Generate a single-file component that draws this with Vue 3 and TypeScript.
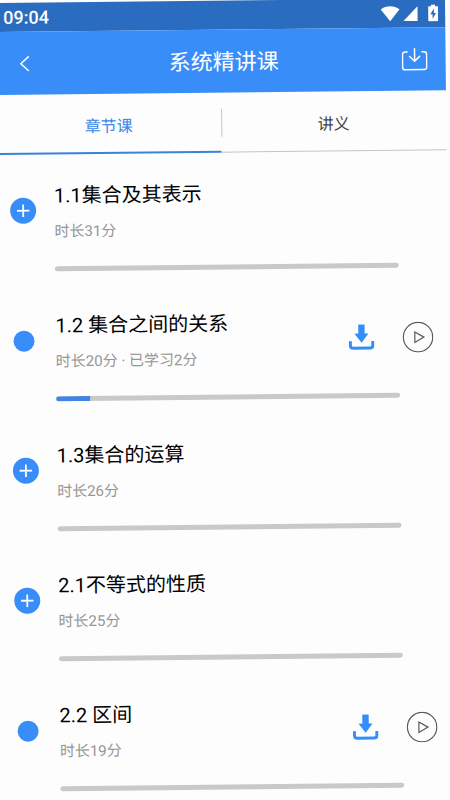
<script setup lang="ts">
import { ref } from 'vue'

interface Lesson {
  title: string
  meta: string
  progress: number
  expandable: boolean
}

const tabs: string[] = ['章节课', '讲义']
const activeTab = ref(0)

const lessons: Lesson[] = [
  { title: '1.1集合及其表示', meta: '时长31分', progress: 0, expandable: true },
  { title: '1.2 集合之间的关系', meta: '时长20分 · 已学习2分', progress: 10, expandable: false },
  { title: '1.3集合的运算', meta: '时长26分', progress: 0, expandable: true },
  { title: '2.1不等式的性质', meta: '时长25分', progress: 0, expandable: true },
  { title: '2.2 区间', meta: '时长19分', progress: 0, expandable: false },
]
</script>

<template>
  <div class="stage">
    <div class="screen">
      <div class="status">
        <span class="time">09:04</span>
        <div class="status-icons">
          <svg class="wifi" width="20" height="16" viewBox="0 0 20 16">
            <path d="M.6 3.6C6-.7 14-.7 19.4 3.6L10 15.4Z" fill="#fff" />
          </svg>
          <svg class="signal" width="15" height="16" viewBox="0 0 15 16">
            <path d="M14.4.6V15.4H.3Z" fill="#fff" />
          </svg>
          <svg class="battery" width="10" height="17" viewBox="0 0 10 17">
            <path d="M3 0H7V1.8H9Q10 1.8 10 2.8V16Q10 17 9 17H1Q0 17 0 16V2.8Q0 1.8 1 1.8H3Z" fill="#fff" />
            <path d="M5.8 4.2 2.2 9.8H4.4V14.4L7.9 8.5H5.8Z" fill="#2a6dc0" />
          </svg>
        </div>
      </div>

      <header class="header">
        <button class="icon-button" type="button">
          <svg width="10" height="16" viewBox="0 0 10 16" fill="none" stroke="#fff" stroke-width="1.5">
            <path d="M9.2.7 1.2 8 9.2 15.3" />
          </svg>
        </button>
        <h1>系统精讲课</h1>
        <button class="icon-button" type="button">
          <svg width="26" height="24" viewBox="0 0 26 24" fill="none" stroke="#fff" stroke-width="1.5" stroke-linecap="round" stroke-linejoin="round">
            <path d="M5.6 4.3H3.6Q.9 4.3.9 7V19.4Q.9 22.1 3.6 22.1H22.4Q25.1 22.1 25.1 19.4V7Q25.1 4.3 22.4 4.3H20.4" />
            <path d="M13 1.2V13.6M8 8.8 13 13.7 18 8.8" />
          </svg>
        </button>
      </header>

      <nav class="tabs">
        <button
          v-for="(tab, i) in tabs"
          :key="tab"
          type="button"
          class="tab"
          :class="{ active: activeTab === i }"
          @click="activeTab = i"
        >
          {{ tab }}
        </button>
      </nav>

      <main>
        <article v-for="lesson in lessons" :key="lesson.title" class="lesson">
          <div class="lesson-head">
            <div class="marker">
              <button v-if="lesson.expandable" class="expand" type="button">
                <svg width="14" height="14" viewBox="0 0 14 14" stroke="#fff" stroke-width="1.8">
                  <path d="M7 .8V13.2M.8 7H13.2" />
                </svg>
              </button>
              <span v-else class="dot"></span>
            </div>
            <div class="text">
              <h2>{{ lesson.title }}</h2>
              <p>{{ lesson.meta }}</p>
            </div>
            <div v-if="!lesson.expandable" class="actions">
              <button class="icon-button" type="button">
                <svg width="26" height="26" viewBox="0 0 26 26">
                  <path d="M9.8.3H16.2V9.4H20L13 18.6 6 9.4H9.8Z" fill="#338ef9" />
                  <path d="M1.8 17V21.2Q1.8 24 4.6 24H21.4Q24.2 24 24.2 21.2V17" fill="none" stroke="#338ef9" stroke-width="3" />
                </svg>
              </button>
              <button class="icon-button" type="button">
                <svg width="31" height="31" viewBox="0 0 31 31" fill="none" stroke="#5a5a5a" stroke-width="1.2">
                  <circle cx="15.5" cy="15.5" r="14.7" />
                  <path d="M12.3 10.4V20.8L21.4 15.6Z" />
                </svg>
              </button>
            </div>
          </div>
          <div class="bar" role="progressbar" :aria-valuenow="lesson.progress">
            <div class="fill" :style="{ width: lesson.progress + '%' }"></div>
          </div>
        </article>
      </main>
    </div>
  </div>
</template>

<style>
body {
  background: #fdfdfd;
}
</style>

<style scoped>
.stage {
  box-sizing: border-box;
  height: 100vh;
  padding-top: 3px;
  overflow: hidden auto;
  scrollbar-width: none;
  font-family: Roboto, "Noto Sans CJK SC", sans-serif;
}

/* The whole screen leans slightly, pivoting on its top left corner. */
.screen {
  transform: translateX(-5px) rotate(-0.6deg);
  transform-origin: 0 0;
}

button {
  margin: 0;
  padding: 0;
  border: 0;
  background: none;
  font: inherit;
  cursor: pointer;
}

svg {
  display: block;
}

.status {
  display: flex;
  align-items: center;
  justify-content: space-between;
  height: 29px;
  padding: 0 7px 0 8px;
  background: #2a6dc0;
  color: #fff;
}

.time {
  font-size: 18px;
  line-height: 28px;
  font-weight: 500;
}

.status-icons {
  display: flex;
  align-items: center;
}

.signal {
  margin: 0 10px 0 3px;
}

.header {
  display: flex;
  align-items: center;
  justify-content: space-between;
  height: 63px;
  padding: 0 18px;
  background: #388df8;
  color: #fff;
}

.header .icon-button {
  box-sizing: border-box;
  display: flex;
  flex: 1 1 0;
}

.header .icon-button:first-child {
  padding-left: 6px;
}

.header .icon-button:last-child {
  justify-content: flex-end;
}

h1 {
  margin: 0;
  padding-top: 3px;
  font-size: 22px;
  line-height: 28px;
  font-weight: 400;
}

.tabs {
  position: relative;
  display: flex;
  height: 60px;
}

.tabs::after {
  content: "";
  position: absolute;
  top: 16px;
  left: 50%;
  width: 1px;
  height: 28px;
  background: #c4c4c4;
}

.tab {
  flex: 1;
  padding-top: 7px;
  border-bottom: 1px solid #c4c4c4;
  font-size: 16px;
  line-height: 20px;
  color: #444;
}

.tab.active {
  border-bottom: 2px solid #3b82d8;
  color: #3b86e8;
}

.lesson {
  padding-bottom: 13px;
}

.lesson-head {
  display: flex;
  align-items: center;
  height: 112px;
  padding-right: 15px;
}

.marker {
  display: flex;
  justify-content: center;
  width: 51px;
  margin-right: 6px;
}

.expand {
  display: flex;
  align-items: center;
  justify-content: center;
  width: 26px;
  height: 26px;
  border-radius: 50%;
  background: #388df8;
}

.dot {
  width: 21px;
  height: 21px;
  border-radius: 50%;
  background: #388df8;
}

.text {
  display: flex;
  flex: 1;
  flex-direction: column;
  gap: 12px;
  padding-top: 2px;
}

h2 {
  margin: 0;
  font-size: 20px;
  line-height: 28px;
  font-weight: 400;
  color: #000;
}

p {
  margin: 0;
  font-size: 15px;
  line-height: 20px;
  color: #969696;
}

.actions {
  display: flex;
  align-items: center;
  gap: 28px;
}

.bar {
  height: 5px;
  margin: 0 49px 0 57px;
  border-radius: 3px;
  overflow: hidden;
  background: #c9c9c9;
}

.fill {
  height: 100%;
  background: #4084e8;
}
</style>
